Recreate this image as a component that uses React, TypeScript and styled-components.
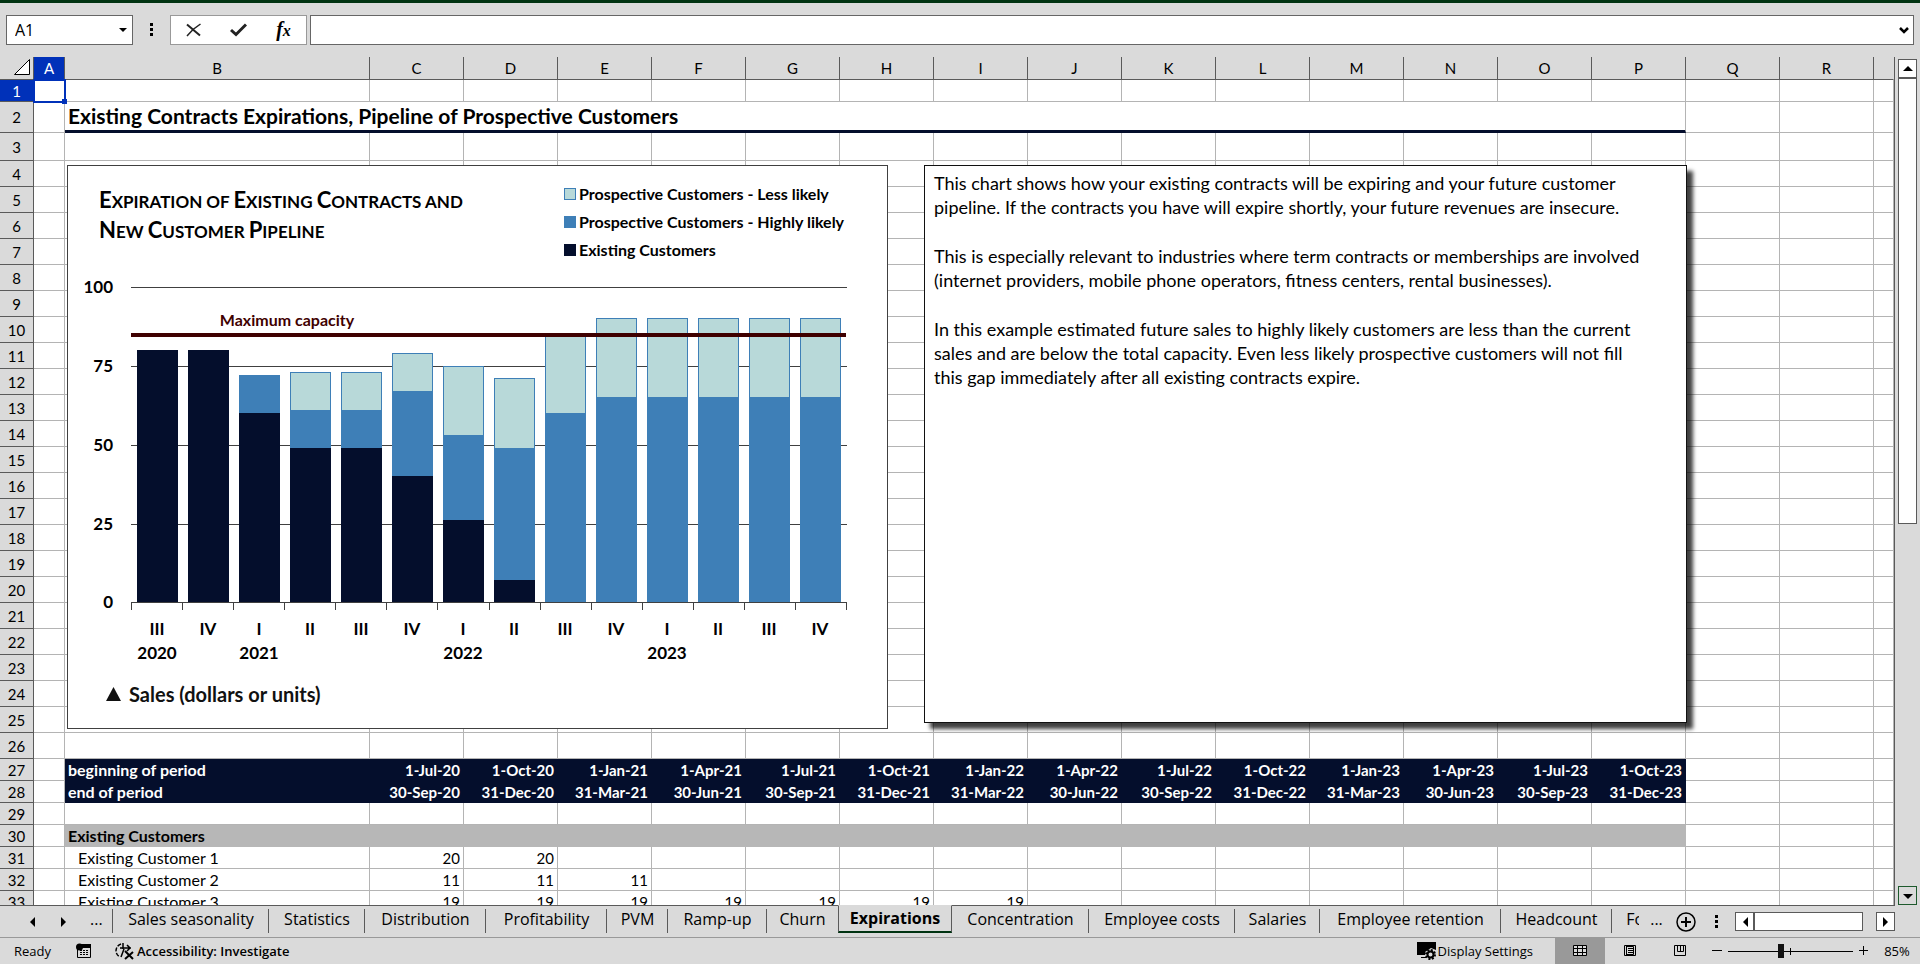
import React from "react";
import styled, { createGlobalStyle, css } from "styled-components";

const ink = "#040e2c";
const blue = "#3e7fb7";
const pale = "#b8d9d9";
const chrome = "#dadada";
const line = "#b4b4b4";
const frame = "#5a5a5a";
const accent = "#0031b9";
const green = "#003311";

const GlobalStyle = createGlobalStyle`
  * { box-sizing: border-box; }
  body { margin: 0; background: #fff; color: #000; font-family: Lato, "Liberation Sans", sans-serif; }
  button, input { font: inherit; color: inherit; }
  button { padding: 0; border: 0; background: none; }
`;

const Page = styled.div`
  display: flex;
  flex-direction: column;
  height: 100vh;
  padding-bottom: 2px;
  overflow: hidden;
`;

/* Formula bar */
const FormulaBar = styled.header`
  display: flex;
  align-items: center;
  flex: none;
  height: 57px;
  padding: 0 6px 0 6px;
  border-top: 3px solid ${green};
  background: ${chrome};
`;
const Field = styled.div<{ $grow?: boolean; $soft?: boolean }>`
  display: flex;
  align-items: center;
  height: 30px;
  border: 1px solid ${(p) => (p.$soft ? "#999" : "#666")};
  background: #fff;
  ${(p) => p.$grow && css`flex: 1; margin-left: 3px;`}
`;
const NameInput = styled.input`
  width: 107px;
  padding: 0 8px;
  border: 0;
  outline: 0;
  font: 16px "Open Sans", sans-serif;
`;
const FormulaInput = styled(NameInput)`
  flex: 1;
`;
const DropButton = styled.button`
  display: grid;
  place-items: center;
  width: 18px;
  height: 28px;
`;
const Grip = styled.span`
  width: 37px;
  display: grid;
  place-items: center;
`;
const FxButton = styled.button`
  display: grid;
  place-items: center;
  width: 45px;
  height: 28px;
`;
const FxMark = styled.span`
  font: italic 700 20px/22px "Liberation Serif", serif;
  small { font-size: 16px; }
`;

/* Worksheet */
const Work = styled.main`
  display: flex;
  flex: 1;
  min-height: 0;
  background: ${chrome};
`;
const Sheet = styled.div`
  position: relative;
  flex: 1;
  min-width: 0;
  overflow: hidden;
`;
const Grid = styled.table`
  width: 100%;
  table-layout: fixed;
  border-collapse: separate;
  border-spacing: 0;
  background: #fff;
  font-size: 15px;
`;
const ColHead = styled.th<{ $on?: boolean; $last?: boolean }>`
  height: 23px;
  padding: 0;
  border-right: 1px solid ${(p) => (p.$last ? chrome : frame)};
  border-bottom: 1px solid ${frame};
  background: ${(p) => (p.$on ? accent : chrome)};
  color: ${(p) => (p.$on ? "#fff" : "#000")};
  font-weight: 400;
  line-height: 18px;
`;
const Corner = styled.td`
  padding: 0 3px 2px 0;
  border-bottom: 1px solid ${frame};
  border-right: 1px solid ${frame};
  background: ${chrome};
  text-align: right;
  line-height: 0;
`;
const RowHead = styled.th<{ $on?: boolean }>`
  padding: 0;
  border-right: 1px solid ${frame};
  border-bottom: 1px solid ${frame};
  background: ${(p) => (p.$on ? accent : chrome)};
  color: ${(p) => (p.$on ? "#fff" : "#000")};
  font-weight: 400;
  line-height: 18px;
`;
const Row = styled.tr<{ $h: number }>`
  height: ${(p) => p.$h}px;
`;
type Tone = "plain" | "title" | "navy" | "grey";
const Cell = styled.td<{ $tone?: Tone; $left?: boolean; $indent?: boolean }>`
  padding: 0 3px;
  border-right: 1px solid ${line};
  border-bottom: 1px solid ${line};
  text-align: right;
  white-space: nowrap;
  line-height: 18px;
  ${(p) => p.$left && css`
    font-size: 16px;
    text-align: left;
  `}
  ${(p) => p.$indent && css`padding-left: 13px;`}
  ${(p) => p.$tone === "title" && css`
    border-bottom: 3px solid ${ink};
    font-size: 21px;
    font-weight: 700;
    line-height: 24px;
  `}
  ${(p) => p.$tone === "navy" && css`
    border-color: ${ink};
    background: ${ink};
    color: #fff;
    font-weight: 700;
  `}
  ${(p) => p.$tone === "grey" && css`
    border-color: #b7b7b7;
    background: #b7b7b7;
    font-weight: 700;
  `}
`;
const ActiveCell = styled.td`
  position: relative;
  padding: 0;
`;
const Selection = styled.div`
  position: absolute;
  inset: -1px -1px -1px -1px;
  border: 2px solid ${accent};
  &::after {
    content: "";
    position: absolute;
    right: -3px;
    bottom: -3px;
    width: 5px;
    height: 5px;
    background: ${accent};
  }
`;

/* Floating chart */
const ChartBox = styled.section`
  position: absolute;
  left: 67px;
  top: 108px;
  width: 821px;
  height: 564px;
  border: 1px solid #404040;
  background: #fff;
`;
const ChartHead = styled.div`
  display: flex;
  height: 104px;
`;
const ChartTitle = styled.h2`
  width: 496px;
  margin: 0;
  padding: 21px 0 0 31px;
  font-size: 17px;
  font-weight: 700;
  line-height: 30px;
  text-transform: uppercase;
  white-space: nowrap;
`;
const Word = styled.span`
  display: inline-block;
  &::first-letter {
    font-size: 22px;
    line-height: 20px;
  }
`;
const Legend = styled.ul`
  margin: 0;
  padding: 14px 0 0;
  list-style: none;
  font-size: 16px;
  font-weight: 700;
  line-height: 28px;
`;
const LegendItem = styled.li<{ $fill: string; $edge: string }>`
  display: flex;
  align-items: center;
  gap: 3px;
  white-space: nowrap;
  &::before {
    content: "";
    width: 10px;
    height: 10px;
    border: 1px solid ${(p) => p.$edge};
    background: ${(p) => p.$fill};
  }
`;
const Plot = styled.svg`
  display: block;
  font-family: Lato, sans-serif;
  font-size: 17px;
  font-weight: 700;
`;
const Caption = styled.p`
  display: flex;
  align-items: center;
  gap: 8px;
  margin: 0;
  padding: 15px 0 0 38px;
  font-size: 20px;
  font-weight: 700;
  line-height: 24px;
  color: #111;
`;

/* Floating note */
const Note = styled.aside`
  position: absolute;
  left: 924px;
  top: 108px;
  width: 763px;
  height: 558px;
  padding: 5px 9px;
  border: 1px solid #111;
  background: #fff;
  box-shadow: 6px 6px 4px rgba(0, 0, 0, 0.75);
  font-size: 18px;
  line-height: 24px;
`;
const Para = styled.p`
  margin: 0 0 25px;
  white-space: pre;
`;

/* Scroll bars */
const VScroll = styled.div`
  display: flex;
  flex-direction: column;
  flex: none;
  width: 26px;
  padding: 2px 3px 0 3px;
  border-left: 1px solid ${frame};
`;
const ScrollButton = styled.button<{ $green?: boolean; $clear?: boolean }>`
  display: grid;
  place-items: center;
  flex: none;
  width: 19px;
  height: 19px;
  border: 1px solid ${(p) => (p.$green ? "#1e5a2d" : frame)};
  background: ${(p) => (p.$clear ? chrome : "#fff")};
`;
const VThumb = styled.div`
  width: 19px;
  height: 446px;
  border: 1px solid ${frame};
  background: #fff;
`;
const Track = styled.div`
  flex: 1;
`;

/* Sheet tabs */
const TabBar = styled.nav`
  display: flex;
  flex: none;
  height: 33px;
  padding-right: 25px;
  border-bottom: 1px solid #999;
  background: ${chrome};
  font: 16px/28px "Open Sans", sans-serif;
`;
const tick = `linear-gradient(${frame}, ${frame}) right 3px / 1px 24px no-repeat`;
const TabNav = styled.div`
  display: flex;
  align-items: center;
  flex: none;
  width: 113px;
  padding: 0 10px 0 26px;
  gap: 20px;
  border-top: 1px solid ${frame};
  background: ${tick};
`;
const Tabs = styled.div`
  display: flex;
  flex: 1;
  min-width: 0;
  overflow: hidden;
`;
const Tab = styled.button<{ $w: number; $on?: boolean; $bare?: boolean }>`
  flex: none;
  width: ${(p) => p.$w}px;
  height: 32px;
  padding: 0 0 4px;
  border-top: 1px solid ${frame};
  background: ${(p) => (p.$bare ? "none" : tick)};
  line-height: 25px;
  white-space: nowrap;
  ${(p) => p.$on && css`
    height: 28px;
    padding: 0;
    border: 1px solid ${frame};
    border-top-color: ${chrome};
    border-bottom: 2px solid ${green};
    background: ${chrome};
    font-weight: 700;
  `}
`;
const TabTail = styled.div`
  display: flex;
  align-items: center;
  flex: none;
  border-top: 1px solid ${frame};
`;
const Ellipsis = styled.button`
  padding-bottom: 6px;
  line-height: 22px;
`;
const MoreTabs = styled(Ellipsis)`
  width: 35px;
`;
const AddSheet = styled.button`
  display: grid;
  place-items: center;
  width: 24px;
`;
const HThumb = styled.div`
  width: 109px;
  height: 19px;
  margin-right: 13px;
  border: 1px solid ${frame};
  background: #fff;
`;

/* Status bar */
const StatusBar = styled.footer`
  display: flex;
  align-items: stretch;
  flex: none;
  height: 26px;
  padding-left: 14px;
  background: ${chrome};
  font: 13px/26px "Open Sans", sans-serif;
`;
const StatusButton = styled.button<{ $strong?: boolean }>`
  display: flex;
  align-items: center;
  gap: 2px;
  white-space: nowrap;
  font-weight: ${(p) => (p.$strong ? 600 : 400)};
`;
const Macro = styled(StatusButton)`
  margin: 0 23px 0 25px;
`;
const DisplayButton = styled(StatusButton)`
  margin: 0 22px 0 auto;
`;
const ViewButton = styled.button<{ $on?: boolean }>`
  display: grid;
  place-items: center;
  width: 50px;
  background: ${(p) => (p.$on ? "#999" : "none")};
`;
const Zoom = styled.div`
  display: flex;
  align-items: center;
  width: 164px;
  padding-left: 7px;
`;
const IconButton = styled.button`
  display: grid;
  place-items: center;
`;
const Slider = styled.input`
  flex: 1;
  min-width: 0;
  height: 15px;
  margin: 0 6px;
  appearance: none;
  background:
    linear-gradient(#000, #000) center / 1px 7px no-repeat,
    linear-gradient(#000, #000) center / 100% 1px no-repeat;
  &::-webkit-slider-thumb {
    appearance: none;
    width: 6px;
    height: 14px;
    background: #111;
  }
`;
const ZoomLevel = styled.button`
  width: 51px;
  padding-left: 5px;
`;

const Tri = ({ d }: { d: "up" | "down" | "left" | "right" }) => {
  const pts = { up: "1,8 11,8 6,3", down: "1,4 11,4 6,9", left: "9,1 9,11 4,6", right: "3,1 3,11 8,6" };
  return (
    <svg width="12" height="12" aria-hidden="true">
      <polygon points={pts[d]} />
    </svg>
  );
};
const Dots = () => (
  <svg width="4" height="14" aria-hidden="true">
    <path d="M0 0h3v3H0zM0 5h3v3H0zM0 10h3v3H0z" />
  </svg>
);

const quarters = ["III", "IV", "I", "II", "III", "IV", "I", "II", "III", "IV", "I", "II", "III", "IV"];
const years: Record<number, string> = { 0: "2020", 2: "2021", 6: "2022", 10: "2023" };
const stacks: [number, number, number][] = [
  [80, 0, 0], [80, 0, 0], [60, 12, 0], [49, 12, 12], [49, 12, 12], [40, 27, 12], [26, 27, 22],
  [7, 42, 22], [0, 60, 25], [0, 65, 25], [0, 65, 25], [0, 65, 25], [0, 65, 25], [0, 65, 25],
];
const baseY = 332;
const leftX = 63;
const rightX = 778;
const step = (rightX - leftX) / stacks.length;
const yOf = (v: number) => Math.floor(baseY + 0.9 - v * 3.155);
const midOf = (i: number) => Math.round(leftX + (i + 0.5) * step);

const ExpirationPlot = () => (
  <Plot width="819" height="397" role="img" aria-label="Stacked sales by quarter">
    {[0, 25, 50, 75, 100].map((v) => (
      <g key={v}>
        <text x="45" y={yOf(v) + 6} textAnchor="end">{v}</text>
        <rect x={leftX} y={yOf(v)} width={rightX - leftX + 1} height="1" fill="#404040" />
      </g>
    ))}
    {stacks.map(([e, h, l], i) => {
      const x = Math.floor(leftX + i * step) + 6;
      const w = 41;
      return (
        <g key={i}>
          {e > 0 && <rect x={x} y={yOf(e)} width={w} height={baseY - yOf(e)} fill={ink} />}
          {h > 0 && <rect x={x} y={yOf(e + h)} width={w} height={yOf(e) - yOf(e + h)} fill={blue} />}
          {l > 0 && (
            <>
              <rect x={x} y={yOf(e + h + l)} width={w} height={yOf(e + h) - yOf(e + h + l)} fill={blue} />
              <rect x={x + 1} y={yOf(e + h + l) + 1} width={w - 2} height={yOf(e + h) - yOf(e + h + l) - 1} fill={pale} />
            </>
          )}
          <text x={midOf(i)} y="365" textAnchor="middle">{quarters[i]}</text>
          {years[i] && <text x={midOf(i)} y="389" textAnchor="middle">{years[i]}</text>}
        </g>
      );
    })}
    {Array.from({ length: 15 }, (_, i) => (
      <rect key={i} x={Math.round(leftX + i * step)} y={baseY} width="1" height="8" fill="#404040" />
    ))}
    <rect x={leftX} y="63" width={rightX - leftX} height="4" fill="#3f0000" />
    <text x="219" y="56" textAnchor="middle" fontSize="16" fill="#3f0000">Maximum capacity</text>
  </Plot>
);

const letters = "ABCDEFGHIJKLMNOPQR".split("");
const begins = ["1-Jul-20", "1-Oct-20", "1-Jan-21", "1-Apr-21", "1-Jul-21", "1-Oct-21", "1-Jan-22", "1-Apr-22", "1-Jul-22", "1-Oct-22", "1-Jan-23", "1-Apr-23", "1-Jul-23", "1-Oct-23"];
const ends = ["30-Sep-20", "31-Dec-20", "31-Mar-21", "30-Jun-21", "30-Sep-21", "31-Dec-21", "31-Mar-22", "30-Jun-22", "30-Sep-22", "31-Dec-22", "31-Mar-23", "30-Jun-23", "30-Sep-23", "31-Dec-23"];

type RowData = { label: string; values: (string | number)[]; tone?: Tone; indent?: boolean };
const rows: Record<number, RowData> = {
  27: { label: "beginning of period", values: begins, tone: "navy" },
  28: { label: "end of period", values: ends, tone: "navy" },
  30: { label: "Existing Customers", values: Array(14).fill(""), tone: "grey" },
  31: { label: "Existing Customer 1", values: [20, 20], indent: true },
  32: { label: "Existing Customer 2", values: [11, 11, 11], indent: true },
  33: { label: "Existing Customer 3", values: [19, 19, 19, 19, 19, 19, 19], indent: true },
};
const rowHeight = (n: number) => (n === 2 ? 31 : n === 3 ? 28 : n >= 4 && n <= 26 ? 26 : 22);

const SheetRow = ({ n }: { n: number }) => {
  const data = rows[n];
  return (
    <Row $h={rowHeight(n)}>
      <RowHead scope="row" $on={n === 1}>{n}</RowHead>
      {n === 1 ? <ActiveCell><Selection /></ActiveCell> : <Cell />}
      {n === 2 ? (
        <Cell $tone="title" $left colSpan={15}>Existing Contracts Expirations, Pipeline of Prospective Customers</Cell>
      ) : (
        <>
          <Cell $left $tone={data?.tone} $indent={data?.indent}>{data?.label}</Cell>
          {begins.map((_, i) => (
            <Cell key={i} $tone={data?.tone}>{data?.values[i]}</Cell>
          ))}
        </>
      )}
      <Cell /><Cell /><Cell />
    </Row>
  );
};

const tabs: [string, number][] = [
  ["Sales seasonality", 156], ["Statistics", 96], ["Distribution", 121], ["Profitability", 121], ["PVM", 61],
  ["Ramp-up", 99], ["Churn", 71], ["Expirations", 114], ["Concentration", 137], ["Employee costs", 146],
  ["Salaries", 85], ["Employee retention", 181], ["Headcount", 111],
];

export default function App() {
  return (
    <Page>
      <GlobalStyle />
      <FormulaBar>
        <Field>
          <NameInput aria-label="Name box" defaultValue="A1" />
          <DropButton aria-label="Choose name">
            <svg width="8" height="5"><polygon points="0,0 8,0 4,4" /></svg>
          </DropButton>
        </Field>
        <Grip><Dots /></Grip>
        <Field $soft>
          <FxButton aria-label="Cancel">
            <svg width="16" height="14" fill="none" stroke="#222">
              <path d="M1 1.5L14 12.500" strokeWidth="2" />
              <path d="M14.500 1L7 6.500L1 13" strokeWidth="1.500" />
            </svg>
          </FxButton>
          <FxButton aria-label="Enter">
            <svg width="17" height="14" fill="none" stroke="#222" strokeWidth="3"><path d="M1 7l5 4.500L16 1.500" /></svg>
          </FxButton>
          <FxButton aria-label="Insert function">
            <FxMark>f<small>x</small></FxMark>
          </FxButton>
        </Field>
        <Field $grow>
          <FormulaInput aria-label="Formula" />
          <DropButton aria-label="Expand formula bar">
            <svg width="10" height="7" fill="none" stroke="#000" strokeWidth="2.500"><path d="M1 1l4 4l4-4" /></svg>
          </DropButton>
        </Field>
      </FormulaBar>

      <Work>
        <Sheet>
          <Grid>
            <colgroup>
              <col style={{ width: 34 }} />
              <col style={{ width: 31 }} />
              <col style={{ width: 305 }} />
              {letters.slice(2).map((l) => <col key={l} style={{ width: 94 }} />)}
              <col />
            </colgroup>
            <thead>
              <tr>
                <Corner><svg width="16" height="16"><path d="M.5 15.500h15V.5z" fill="#fff" stroke="#000" /></svg></Corner>
                {letters.map((l) => <ColHead key={l} scope="col" $on={l === "A"}>{l}</ColHead>)}
                <ColHead $last />
              </tr>
            </thead>
            <tbody>
              {Array.from({ length: 33 }, (_, i) => <SheetRow key={i} n={i + 1} />)}
            </tbody>
          </Grid>

          <ChartBox>
            <ChartHead>
              <ChartTitle>
                <Word>Expiration</Word> of <Word>Existing</Word> <Word>Contracts</Word> and<br />
                <Word>New</Word> <Word>Customer</Word> <Word>Pipeline</Word>
              </ChartTitle>
              <Legend>
                <LegendItem $fill={pale} $edge={blue}>Prospective Customers - Less likely</LegendItem>
                <LegendItem $fill={blue} $edge={blue}>Prospective Customers - Highly likely</LegendItem>
                <LegendItem $fill={ink} $edge={ink}>Existing Customers</LegendItem>
              </Legend>
            </ChartHead>
            <ExpirationPlot />
            <Caption>
              <svg width="15" height="14" aria-hidden="true"><polygon points="0,14 15,14 7.500,0" fill="#111" /></svg>
              Sales (dollars or units)
            </Caption>
          </ChartBox>

          <Note>
            <Para>{"This chart shows how your existing contracts will be expiring and your future customer\npipeline. If the contracts you have will expire shortly, your future revenues are insecure."}</Para>
            <Para>{"This is especially relevant to industries where term contracts or memberships are involved\n(internet providers, mobile phone operators, fitness centers, rental businesses)."}</Para>
            <Para>{"In this example estimated future sales to highly likely customers are less than the current\nsales and are below the total capacity. Even less likely prospective customers will not fill\nthis gap immediately after all existing contracts expire."}</Para>
          </Note>
        </Sheet>
        <VScroll>
          <ScrollButton aria-label="Scroll up"><Tri d="up" /></ScrollButton>
          <VThumb />
          <Track />
          <ScrollButton $green $clear aria-label="Scroll down"><Tri d="down" /></ScrollButton>
        </VScroll>
      </Work>

      <TabBar>
        <TabNav>
          <IconButton aria-label="Previous sheet"><Tri d="left" /></IconButton>
          <IconButton aria-label="Next sheet"><Tri d="right" /></IconButton>
          <Ellipsis aria-label="Earlier sheets">...</Ellipsis>
        </TabNav>
        <Tabs>
          {tabs.map(([name, w]) => (
            <Tab key={name} $w={w} $on={name === "Expirations"} $bare={name === "Churn"}>{name}</Tab>
          ))}
          <Tab $w={92} $bare>Forecast</Tab>
        </Tabs>
        <TabTail>
          <MoreTabs aria-label="Later sheets">...</MoreTabs>
          <AddSheet aria-label="New sheet">
            <svg width="20" height="20" fill="none" stroke="#000"><circle cx="10" cy="10" r="9" strokeWidth="1.500" /><path d="M5 10h10M10 5v10" strokeWidth="2" /></svg>
          </AddSheet>
          <Grip><Dots /></Grip>
          <ScrollButton aria-label="Scroll left"><Tri d="left" /></ScrollButton>
          <HThumb />
          <ScrollButton aria-label="Scroll right"><Tri d="right" /></ScrollButton>
        </TabTail>
      </TabBar>

      <StatusBar>
        <StatusButton>Ready</StatusButton>
        <Macro aria-label="Record macro">
          <svg width="16" height="16"><circle cx="3.500" cy="4" r="3.500" /><path d="M5 1h10v4H5z" /><path d="M1.500 5v9.500h13V5" fill="none" stroke="#000" /><path d="M4 7.500h9M4 9.500h9M4 11.500h9" stroke="#000" strokeDasharray="2 1" /></svg>
        </Macro>
        <StatusButton $strong>
          <svg width="20" height="18" fill="none" stroke="#000" strokeWidth="1.500">
            <path d="M6 2A7 7 0 0 0 5 15" strokeDasharray="4 1.500" />
            <path d="M8 1v6M5 6h11M12 3l3 3-3 3M9 7l-3 8" />
            <path d="M10 9l8 8M18 10l-8 7" strokeWidth="2" />
          </svg>
          Accessibility: Investigate
        </StatusButton>
        <DisplayButton>
          <svg width="19" height="18">
            <path d="M0 0h19v8l-5-2-6 4v3H0z" />
            <path d="M4 15h5v1H4z" />
            <circle cx="13.500" cy="12.500" r="4.500" fill="none" stroke="#000" strokeWidth="2" strokeDasharray="2 1.500" />
            <circle cx="13.500" cy="12.500" r="3" fill={chrome} stroke="#000" strokeWidth="2" />
          </svg>
          Display Settings
        </DisplayButton>
        <ViewButton $on aria-label="Normal view">
          <svg width="14" height="12" fill={chrome} stroke="#000"><path d="M.5.5h13v10H.5z" /><path d="M.5 3.500h13M.5 7.500h13M4.500 0v11M9.500 0v11" /></svg>
        </ViewButton>
        <ViewButton aria-label="Page layout">
          <svg width="12" height="12" fill="none" stroke="#000"><path d="M.5.5h11v10H.5zM2.500 0v11M4 3.500h5M4 5.500h5M4 7.500h5M2.500 1.500h7v8h-7" /></svg>
        </ViewButton>
        <ViewButton aria-label="Page break preview">
          <svg width="13" height="12" fill="none" stroke="#000"><path d="M.5.5h11v10H.5zM3.500 0v6.500h6V0M6.500 0v6" /></svg>
        </ViewButton>
        <Zoom>
          <IconButton aria-label="Zoom out"><svg width="10" height="10"><path d="M0 4.500h10" stroke="#000" /></svg></IconButton>
          <Slider type="range" min="0" max="100" defaultValue="42" aria-label="Zoom" />
          <IconButton aria-label="Zoom in"><svg width="10" height="10"><path d="M0 4.500h9M4.500 0v9" stroke="#000" /></svg></IconButton>
        </Zoom>
        <ZoomLevel>85%</ZoomLevel>
      </StatusBar>
    </Page>
  );
}
